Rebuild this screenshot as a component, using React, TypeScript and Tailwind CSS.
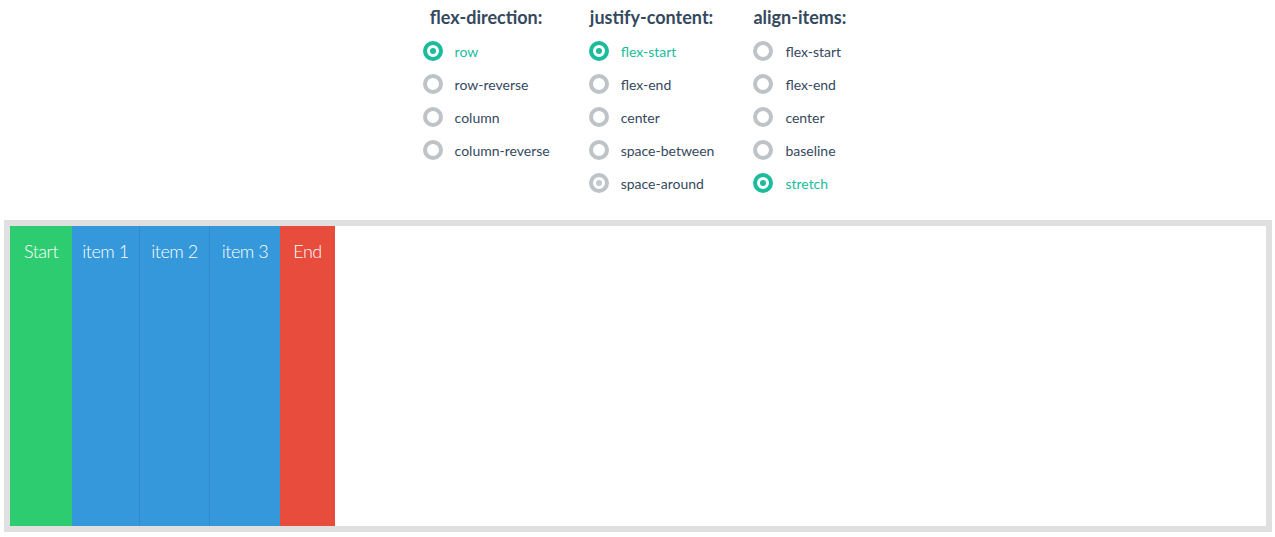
import { useState } from 'react';

const groups = [
  { name: 'flex-direction', options: ['row', 'row-reverse', 'column', 'column-reverse'] },
  { name: 'justify-content', options: ['flex-start', 'flex-end', 'center', 'space-between', 'space-around'] },
  { name: 'align-items', options: ['flex-start', 'flex-end', 'center', 'baseline', 'stretch'] },
];

const items = [
  { label: 'Start', cls: 'bg-[#2ecc71] w-[62px]' },
  { label: 'item 1', cls: 'bg-[#3498db] w-[67px]' },
  { label: 'item 2', cls: 'bg-[#3498db] w-[70px] border-l border-[#2e8ccd]' },
  { label: 'item 3', cls: 'bg-[#3498db] w-[71px] border-l border-[#2e8ccd]' },
  { label: 'End', cls: 'bg-[#e74c3c] w-[55px]' },
];

function Radio({ checked, faint }: { checked: boolean; faint?: boolean }) {
  if (checked) {
    return (
      <span className="flex items-center justify-center w-[20px] h-[20px] rounded-full border-4 border-[#1abc9c] bg-white">
        <span className="w-[6px] h-[6px] rounded-full bg-[#1abc9c]" />
      </span>
    );
  }
  return (
    <span className="flex items-center justify-center w-[20px] h-[20px] rounded-full border-4 border-[#bdc3c7] bg-white">
      {faint && <span className="w-[6px] h-[6px] rounded-full bg-[#c4c9cd]" />}
    </span>
  );
}

export default function App() {
  const [values, setValues] = useState<Record<string, string>>({
    'flex-direction': 'row',
    'justify-content': 'flex-start',
    'align-items': 'stretch',
  });

  return (
    <div className="w-[1275px] h-[537px] bg-white font-['Lato','Liberation_Sans',sans-serif] text-[#34495e]">
      {/* controls */}
      <div className="flex justify-center gap-[39px] pt-[6px] pr-[6px]">
        {groups.map(g => (
          <div key={g.name} className="flex flex-col">
            <h3 className="text-center text-[18px] font-bold leading-[22px] mb-[13px]">{g.name}:</h3>
            <ul className="flex flex-col gap-[13px]">
              {g.options.map(o => {
                const checked = values[g.name] === o;
                return (
                  <li key={o} className="flex items-center gap-[12px] h-[20px] cursor-pointer" onClick={() => setValues(v => ({ ...v, [g.name]: o }))}>
                    <Radio checked={checked} faint={g.name === 'justify-content' && o === 'space-around'} />
                    <span className={`text-[14px] ${checked ? 'text-[#1abc9c]' : 'text-[#34495e]'}`}>{o}</span>
                  </li>
                );
              })}
            </ul>
          </div>
        ))}
      </div>

      {/* demo box */}
      <div className="mx-[4px] mt-[27px] w-[1268px] h-[312px] border-[6px] border-[#e0e0e0] flex flex-row justify-start items-stretch font-light text-white text-[18px] leading-[26px] tracking-[-0.5px]">
        {items.map(it => (
          <div key={it.label} className={`${it.cls} text-center pt-[12px]`}>{it.label}</div>
        ))}
      </div>
    </div>
  );
}
